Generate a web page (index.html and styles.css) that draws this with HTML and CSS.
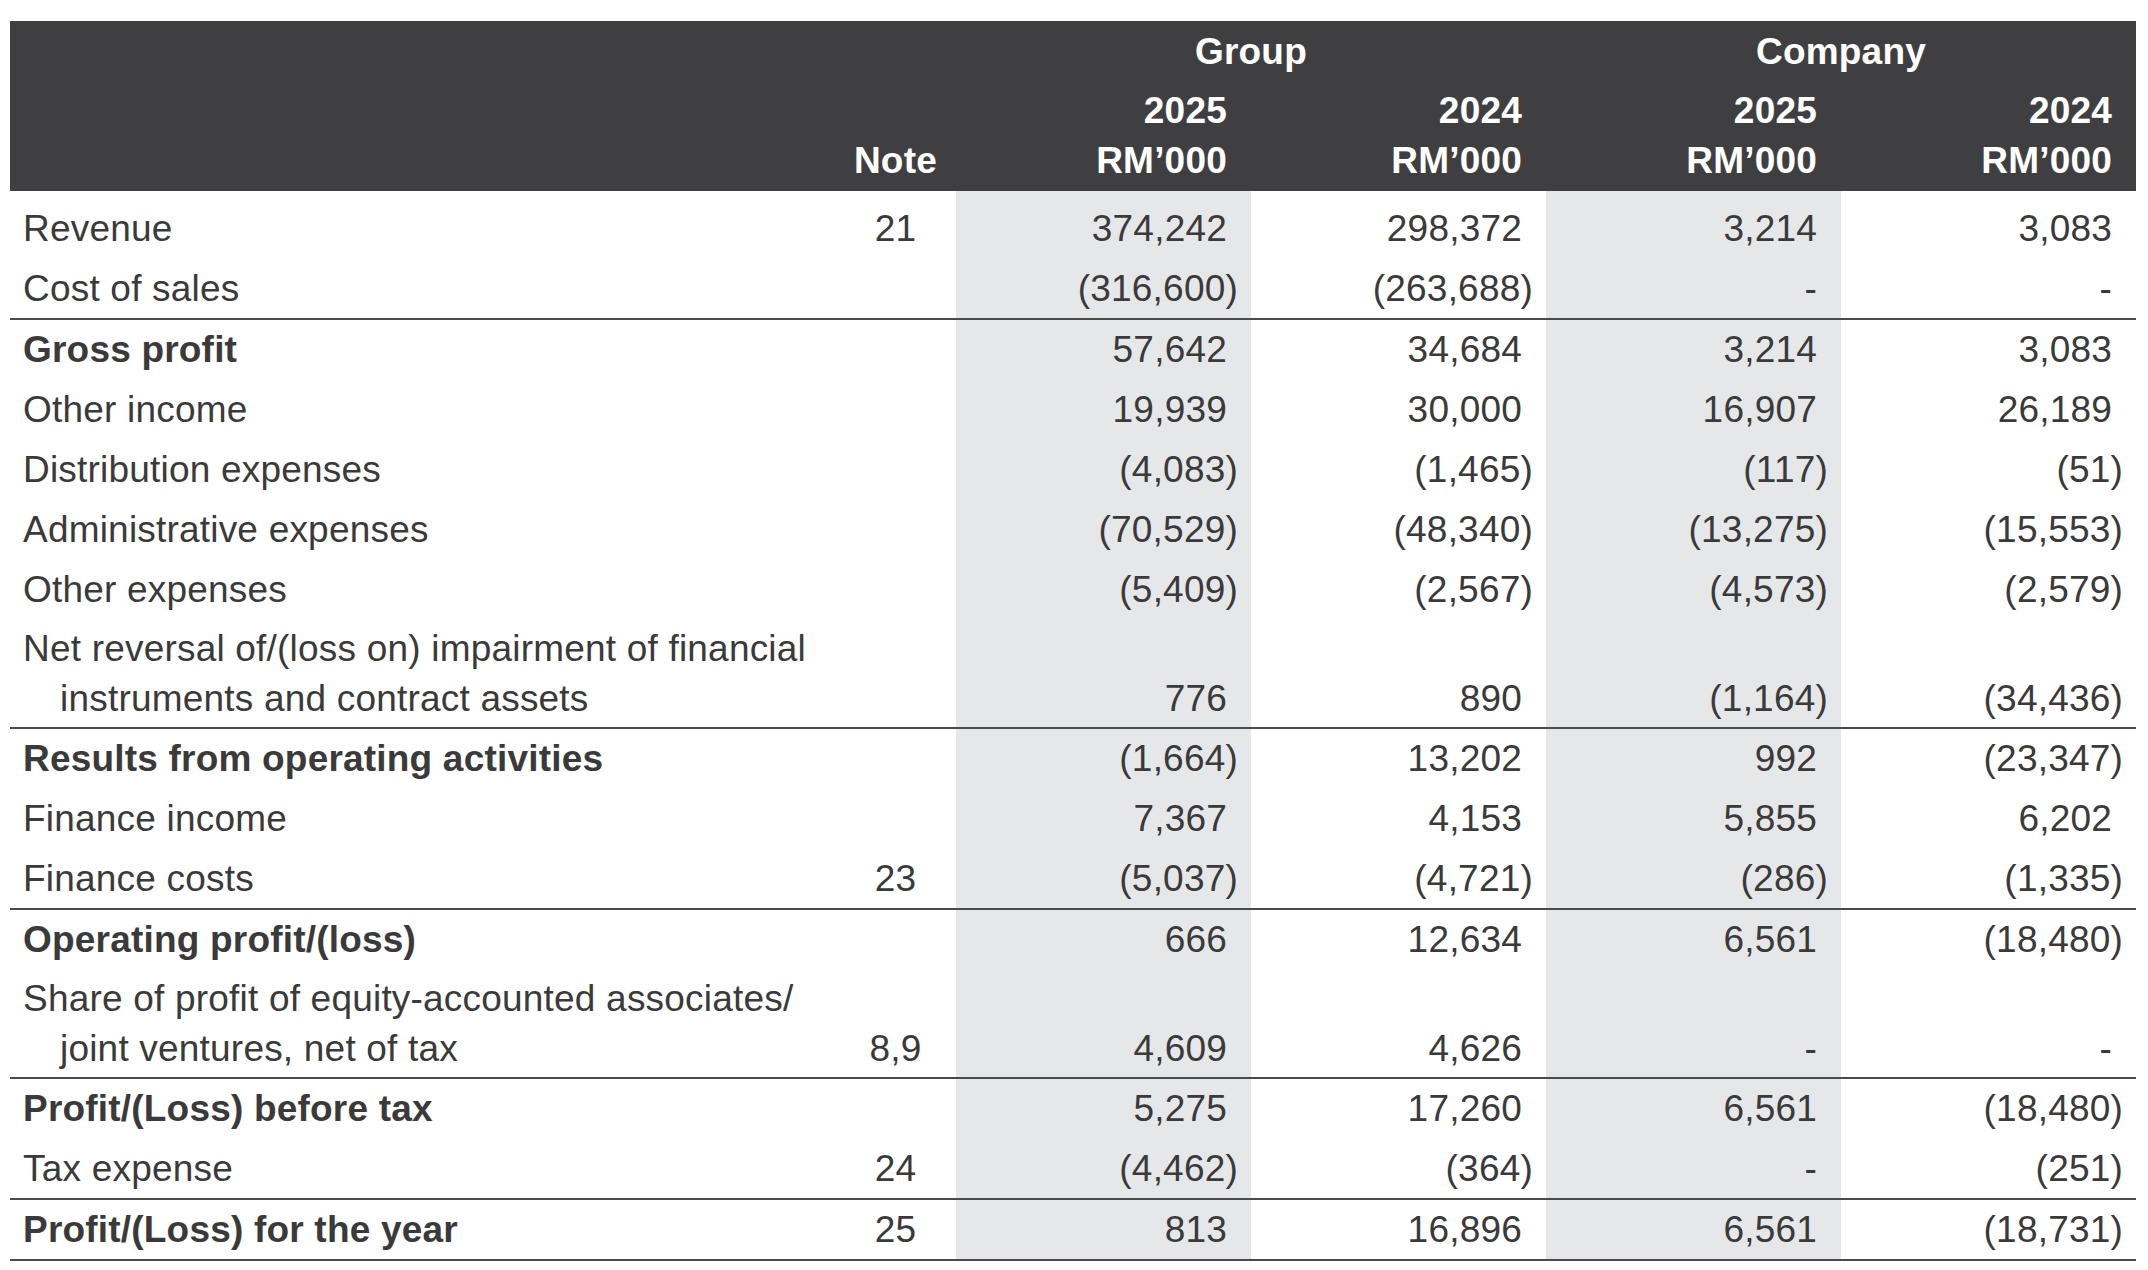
FILE: index.html
```html
<!DOCTYPE html>
<html lang="en">
  <head>
    <meta charset="UTF-8" />
    <meta name="viewport" content="width=device-width, initial-scale=1.0" />
    <title>Statements of Profit or Loss</title>
    <link rel="stylesheet" href="styles.css">
  </head>
  <body>
    <div class="page">
      <table class="pl">
        <colgroup>
          <col class="col-label" />
          <col class="col-note" />
          <col class="col-num shade" />
          <col class="col-num" />
          <col class="col-num shade" />
          <col class="col-num" />
        </colgroup>
        <thead>
          <tr class="head-1">
            <th></th>
            <th></th>
            <th colspan="2" class="center">Group</th>
            <th colspan="2" class="center">Company</th>
          </tr>
          <tr class="head-2">
            <th></th>
            <th></th>
            <th class="num">2025</th>
            <th class="num">2024</th>
            <th class="num">2025</th>
            <th class="num">2024</th>
          </tr>
          <tr class="head-3">
            <th></th>
            <th class="note">Note</th>
            <th class="num">RM’000</th>
            <th class="num">RM’000</th>
            <th class="num">RM’000</th>
            <th class="num">RM’000</th>
          </tr>
        </thead>
        <tbody>
          <tr class="first">
            <td class="label">Revenue</td>
            <td class="note">21</td>
            <td class="num">374,242</td>
            <td class="num">298,372</td>
            <td class="num">3,214</td>
            <td class="num">3,083</td>
          </tr>
          <tr class="rule">
            <td class="label">Cost of sales</td>
            <td class="note"></td>
            <td class="num neg">(316,600)</td>
            <td class="num neg">(263,688)</td>
            <td class="num">-</td>
            <td class="num">-</td>
          </tr>
          <tr>
            <td class="label bold">Gross profit</td>
            <td class="note"></td>
            <td class="num">57,642</td>
            <td class="num">34,684</td>
            <td class="num">3,214</td>
            <td class="num">3,083</td>
          </tr>
          <tr>
            <td class="label">Other income</td>
            <td class="note"></td>
            <td class="num">19,939</td>
            <td class="num">30,000</td>
            <td class="num">16,907</td>
            <td class="num">26,189</td>
          </tr>
          <tr>
            <td class="label">Distribution expenses</td>
            <td class="note"></td>
            <td class="num neg">(4,083)</td>
            <td class="num neg">(1,465)</td>
            <td class="num neg">(117)</td>
            <td class="num neg">(51)</td>
          </tr>
          <tr>
            <td class="label">Administrative expenses</td>
            <td class="note"></td>
            <td class="num neg">(70,529)</td>
            <td class="num neg">(48,340)</td>
            <td class="num neg">(13,275)</td>
            <td class="num neg">(15,553)</td>
          </tr>
          <tr>
            <td class="label">Other expenses</td>
            <td class="note"></td>
            <td class="num neg">(5,409)</td>
            <td class="num neg">(2,567)</td>
            <td class="num neg">(4,573)</td>
            <td class="num neg">(2,579)</td>
          </tr>
          <tr class="rule two">
            <td class="label hang">Net reversal of/(loss on) impairment of financial<br />instruments and contract assets</td>
            <td class="note"></td>
            <td class="num">776</td>
            <td class="num">890</td>
            <td class="num neg">(1,164)</td>
            <td class="num neg">(34,436)</td>
          </tr>
          <tr>
            <td class="label bold">Results from operating activities</td>
            <td class="note"></td>
            <td class="num neg">(1,664)</td>
            <td class="num">13,202</td>
            <td class="num">992</td>
            <td class="num neg">(23,347)</td>
          </tr>
          <tr>
            <td class="label">Finance income</td>
            <td class="note"></td>
            <td class="num">7,367</td>
            <td class="num">4,153</td>
            <td class="num">5,855</td>
            <td class="num">6,202</td>
          </tr>
          <tr class="rule">
            <td class="label">Finance costs</td>
            <td class="note">23</td>
            <td class="num neg">(5,037)</td>
            <td class="num neg">(4,721)</td>
            <td class="num neg">(286)</td>
            <td class="num neg">(1,335)</td>
          </tr>
          <tr>
            <td class="label bold">Operating profit/(loss)</td>
            <td class="note"></td>
            <td class="num">666</td>
            <td class="num">12,634</td>
            <td class="num">6,561</td>
            <td class="num neg">(18,480)</td>
          </tr>
          <tr class="rule two">
            <td class="label hang">Share of profit of equity-accounted associates/<br />joint ventures, net of tax</td>
            <td class="note">8,9</td>
            <td class="num">4,609</td>
            <td class="num">4,626</td>
            <td class="num">-</td>
            <td class="num">-</td>
          </tr>
          <tr>
            <td class="label bold">Profit/(Loss) before tax</td>
            <td class="note"></td>
            <td class="num">5,275</td>
            <td class="num">17,260</td>
            <td class="num">6,561</td>
            <td class="num neg">(18,480)</td>
          </tr>
          <tr class="rule">
            <td class="label">Tax expense</td>
            <td class="note">24</td>
            <td class="num neg">(4,462)</td>
            <td class="num neg">(364)</td>
            <td class="num">-</td>
            <td class="num neg">(251)</td>
          </tr>
          <tr class="rule">
            <td class="label bold">Profit/(Loss) for the year</td>
            <td class="note">25</td>
            <td class="num">813</td>
            <td class="num">16,896</td>
            <td class="num">6,561</td>
            <td class="num neg">(18,731)</td>
          </tr>
        </tbody>
      </table>
    </div>
  </body>
</html>
```

FILE: styles.css
```css
:root {
  --ink: #3a3a3b;
  --head-bg: #3f3f41;
  --shade: #e6e7e8;
  --rule: #4a4a4c;
}
body {
  margin: 0;
  background: #fff;
  font-family: "Liberation Sans", Arial, sans-serif;
  color: var(--ink);
}
.page {
  padding: 21px 12px 0 10px;
}
.pl {
  width: 100%;
  border-collapse: collapse;
  table-layout: fixed;
  font-size: 37px;
  letter-spacing: 0.2px;
}
.col-note {
  width: 115px;
}
.col-num {
  width: 295px;
}
.shade {
  background-color: var(--shade);
}
/* header band */
.pl thead th {
  background-color: var(--head-bg);
  color: #fff;
  font-weight: bold;
  line-height: 50px;
  padding: 0;
  white-space: nowrap;
}
.pl .head-1 th {
  padding-top: 6px;
  padding-bottom: 9px;
}
.pl .head-3 th {
  padding-bottom: 5px;
}
.pl th.center {
  text-align: center;
}
.pl th.num {
  text-align: right;
  padding-right: 24px;
}
.pl th.note {
  padding-right: 6px;
}
/* body rows */
.pl td {
  line-height: 48px;
  padding: 6px 0;
  vertical-align: bottom;
  white-space: nowrap;
}
.pl .first td {
  padding-top: 14px;
}
.pl .rule td {
  border-bottom: 2px solid var(--rule);
  padding-bottom: 5px;
}
.pl .two td {
  line-height: 50px;
  padding-top: 4px;
  padding-bottom: 3px;
}
.pl td.label {
  padding-left: 13px;
}
.label.bold {
  font-weight: bold;
}
.pl td.label.hang {
  padding-left: 50px;
  text-indent: -37px;
}
.note {
  text-align: center;
}
.pl td.note {
  padding-right: 6px;
}
.pl td.num {
  text-align: right;
  padding-right: 24px;
}
.pl td.num.neg {
  padding-right: 13px;
}
```
